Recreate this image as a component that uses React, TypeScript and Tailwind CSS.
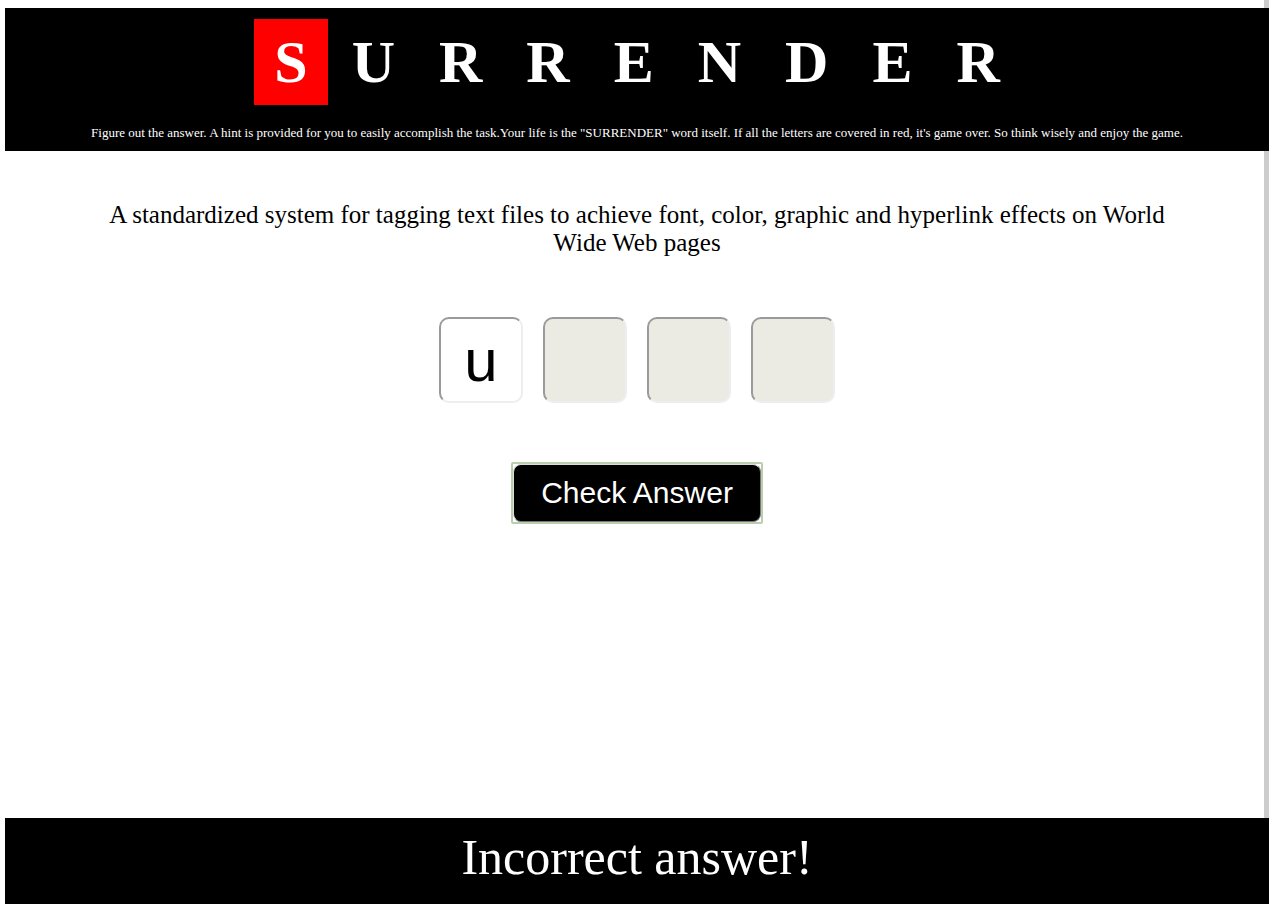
import { useState } from "react";

const WORD = "SURRENDER".split("");
const LOST = 1;

export default function App() {
  const [letters, setLetters] = useState(["u", "", "", ""]);
  return (
    <div className="flex min-h-screen flex-col border-r-[5px] border-[#cccccc] bg-white pl-[5px] pt-2 font-['Liberation_Serif',serif] text-black">
      <header className="-mr-[5px] bg-black pt-[11px] pb-[10px] text-center text-white">
        <h1 className="flex justify-center gap-1 text-[60px] leading-[86px] font-bold">
          {WORD.map((c, i) => (
            <span key={i} className={i < LOST ? "bg-[#ff0000] px-5" : "px-5"}>
              {c}
            </span>
          ))}
        </h1>
        <p className="mt-5 text-[13px] leading-4">
          Figure out the answer. A hint is provided for you to easily accomplish the task.Your life is the "SURRENDER" word itself. If all the letters are covered in red, it's game over. So think wisely and enjoy the game.
        </p>
      </header>
      <main className="-mr-[5px] flex grow flex-col items-center px-[100px] pt-[50px]">
        <p className="text-center text-[25px] leading-7">
          A standardized system for tagging text files to achieve font, color, graphic and hyperlink effects on World Wide Web pages
        </p>
        <div className="mt-[60px] flex gap-5">
          {letters.map((v, i) => (
            <input
              key={i}
              aria-label={`Letter ${i + 1}`}
              maxLength={1}
              value={v}
              onChange={(e) => setLetters(letters.map((l, j) => (j === i ? e.target.value : l)))}
              className={`h-[86px] w-[84px] rounded-[10px] border-2 border-t-[#9a9a9a] border-r-[#eeeeee] border-b-[#eeeeee] border-l-[#9a9a9a] pt-0.5 text-center font-['Liberation_Sans',sans-serif] text-[60px] outline-none ${v ? "bg-white" : "bg-[#ebebe4]"}`}
            />
          ))}
        </div>
        <div className="mt-[59px] rounded-[2px] border-2 border-[#bccdae]">
          <button
            type="button"
            className="block h-[58px] w-[248px] rounded-[8px] border border-t-[#dddddd] border-r-[#777777] border-b-[#777777] border-l-[#dddddd] bg-black pb-0.5 font-['Liberation_Sans',sans-serif] text-[30px] text-white"
          >
            Check Answer
          </button>
        </div>
      </main>
      <footer className="-mr-[5px] bg-black pt-[11px] pb-[18px] text-center text-[50px] leading-[57px] text-white">
        Incorrect answer!
      </footer>
    </div>
  );
}
